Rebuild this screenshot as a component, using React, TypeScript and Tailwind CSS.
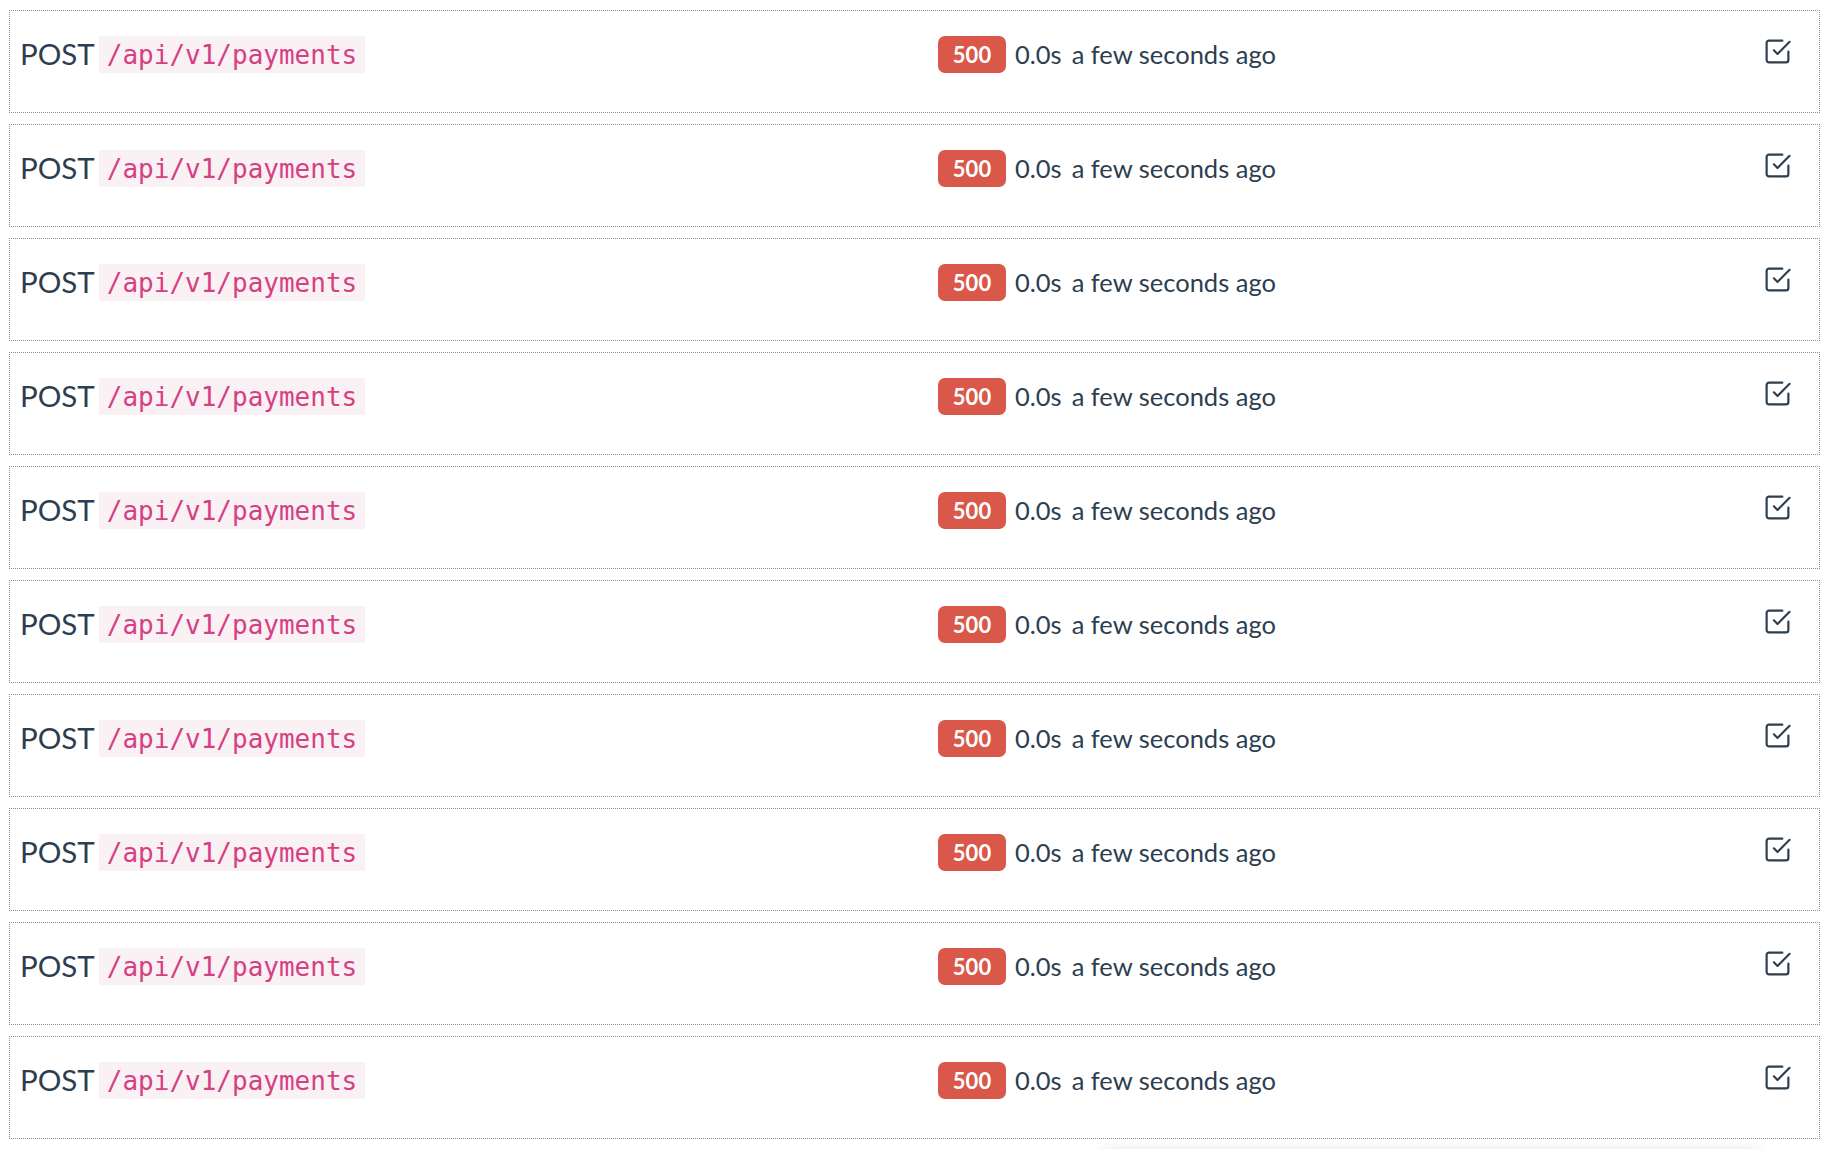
import { useState } from "react";

// one request row in the log list
type Request = {
  id: number;
  method: string;
  path: string;
  status: number;
  duration: string;
  when: string;
};

const requests: Request[] = Array.from({ length: 10 }, (_, i) => ({
  id: i + 1,
  method: "POST",
  path: "/api/v1/payments",
  status: 500,
  duration: "0.0s",
  when: "a few seconds ago",
}));

// feather-style check-square
function CheckSquare() {
  return (
    <svg
      width="29"
      height="29"
      viewBox="0 0 24 24"
      fill="none"
      stroke="#2c3e50"
      strokeWidth="1.8"
      strokeLinecap="round"
      strokeLinejoin="round"
    >
      <polyline points="9 11 12 14 22 4" />
      <path d="M21 12v7a2 2 0 0 1-2 2H5a2 2 0 0 1-2-2V5a2 2 0 0 1 2-2h11" />
    </svg>
  );
}

function RequestRow({ req }: { req: Request }) {
  const [checked, setChecked] = useState(false);

  return (
    <div className="mb-[11px] h-[103px] w-[1811px] border border-dotted border-[#8c8c8c] pl-[10px] pt-[23px]">
      <div className="flex h-[40px] items-center">
        {/* method + path */}
        <div className="flex w-[918px] items-center">
          <span className="font-['Lato'] text-[29.5px] leading-[40px] text-[#2c3e50]">
            {req.method}
          </span>
          <code className="ml-[4px] h-[37px] bg-[#f9f1f4] px-[8px] font-['DejaVu_Sans_Mono',monospace] text-[26px] leading-[39px] text-[#d63f82]">
            {req.path}
          </code>
        </div>

        {/* status, timing */}
        <span className="flex h-[37px] w-[68px] items-center justify-center rounded-[7px] bg-[#d9584a] pt-[1px] font-['Lato'] text-[22px] font-bold text-white">
          {req.status}
        </span>
        <span className="ml-[9px] font-['Lato'] text-[25.5px] text-[#2c3e50]">{req.duration}</span>
        <span className="ml-[10px] font-['Lato'] text-[25.5px] text-[#2c3e50]">{req.when}</span>

        <button
          type="button"
          onClick={() => setChecked(!checked)}
          className="ml-auto mr-[27px] mt-[-5px] flex items-center"
          aria-pressed={checked}
        >
          <CheckSquare />
        </button>
      </div>
    </div>
  );
}

export default function App() {
  return (
    <div className="relative h-[1150px] overflow-hidden bg-white pl-[9px] pt-[10px]">
      {requests.map((req) => (
        <RequestRow key={req.id} req={req} />
      ))}
      {/* toast peeking in at the bottom edge */}
      <div className="absolute left-[1100px] top-[1149px] h-[40px] w-[660px] rounded-[6px] bg-white shadow-[0_0_14px_rgba(0,0,0,0.09)]" />
    </div>
  );
}
